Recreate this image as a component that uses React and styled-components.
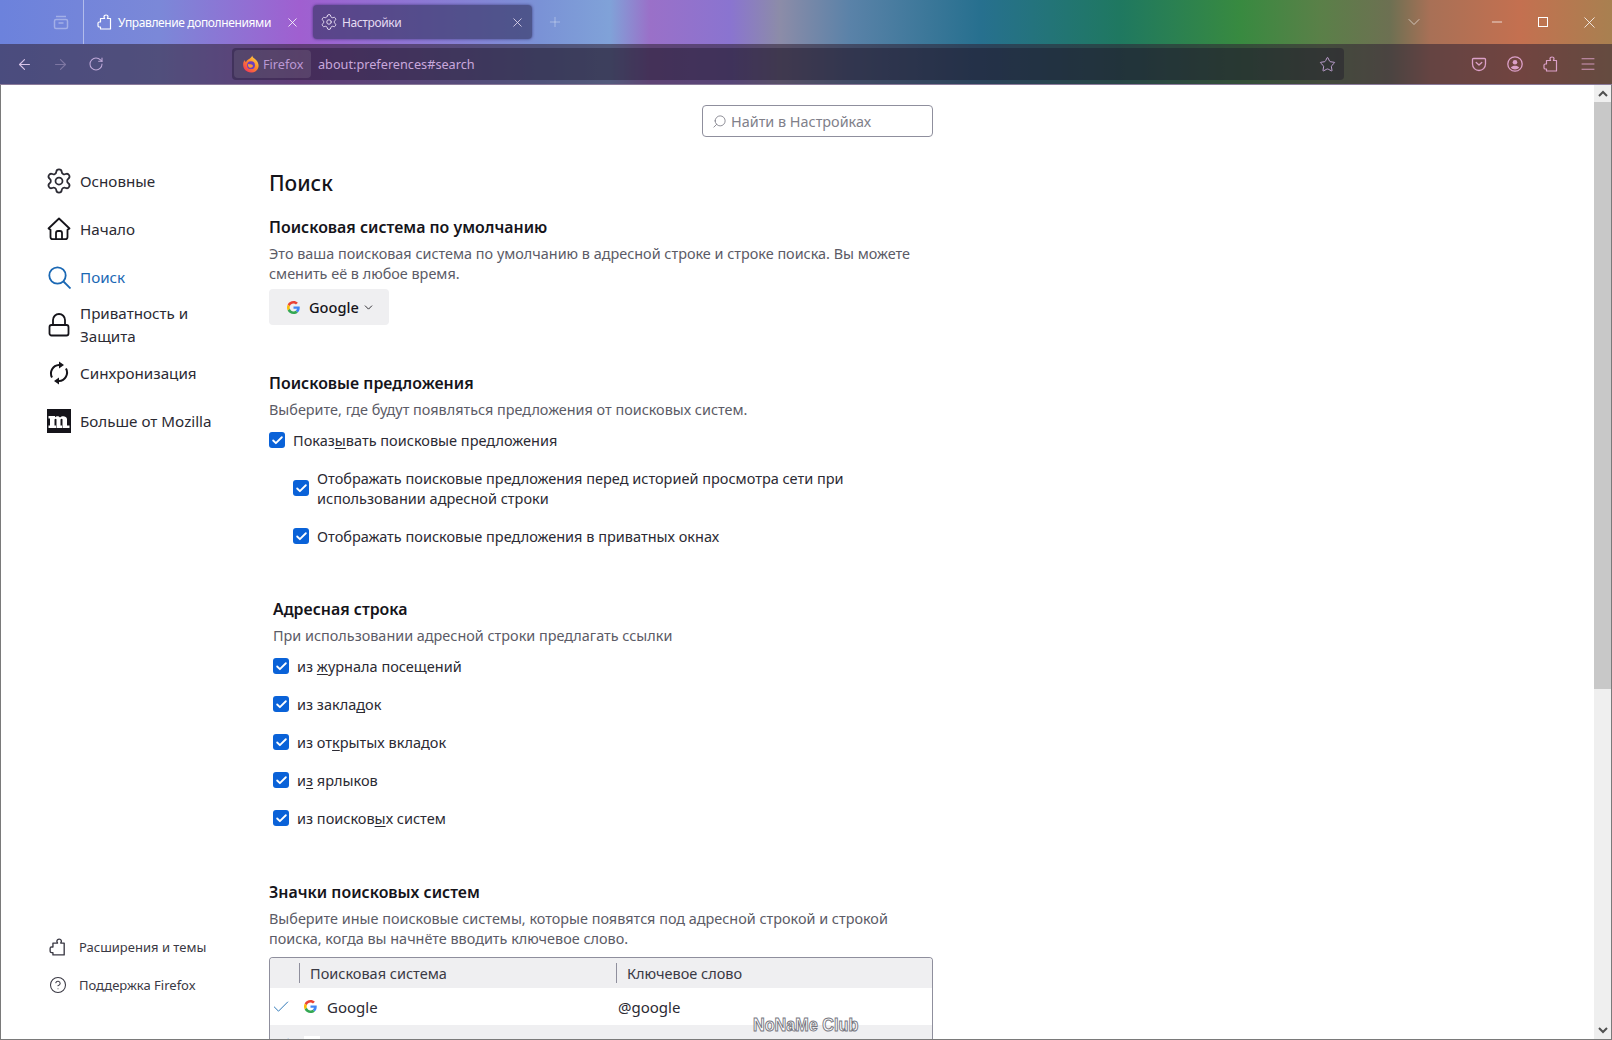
import React from 'react';
import styled, { createGlobalStyle } from 'styled-components';
import { ArrowLeft, ArrowRight, RotateCw, X, Plus, ChevronDown, Minus, Star, Menu, Settings, Search, CircleHelp, Check } from 'lucide-react';

const GlobalStyle = createGlobalStyle`
  html, body {
    margin: 0;
    padding: 0;
    height: 1040px;
    overflow: hidden;
    background: #fff;
    font-family: "Noto Sans", "Open Sans", sans-serif;
    color: #15141a;
  }
  * { box-sizing: border-box; }
`;

const Window = styled.div`
  width: 1612px;
  height: 1040px;
  display: flex;
  flex-direction: column;
  position: relative;
  overflow: hidden;
`;

const Chrome = styled.header`
  height: 85px;
  flex: none;
  display: flex;
  flex-direction: column;
  background: linear-gradient(90deg,
    #6c82dc 0, #7b88d8 160px, #a05fd0 300px, #8d78d4 420px, #7a92d6 540px, #80a2d8 610px,
    #9a70c8 650px, #8a74d0 730px, #8c8ca8 780px, #5a82a8 850px, #27708f 980px,
    #1f7860 1120px, #388a40 1240px, #5a8048 1320px, #6d7052 1390px, #a87056 1430px,
    #c47050 1520px, #a88050 1612px);
  border-bottom: 1px solid #8a7a9a;
`;

const TabStrip = styled.div`
  height: 44px;
  display: flex;
  align-items: center;
  color: #fff;
`;

const TabsButton = styled.div`
  width: 84px;
  height: 44px;
  padding-left: 53px;
  display: flex;
  align-items: center;
  border-right: 1px solid rgba(255, 255, 255, 0.45);
  color: rgba(255, 255, 255, 0.35);
`;

const Tab = styled.div`
  width: ${p => p.$width}px;
  height: 34px;
  margin-left: ${p => p.$gap || 0}px;
  padding: 0 ${p => p.$right}px 0 ${p => p.$left}px;
  display: flex;
  align-items: center;
  gap: 5px;
  font-size: 12px;
  letter-spacing: -0.38px;
  border-radius: 4px;
  color: ${p => (p.$active ? '#e6dcf2' : '#fff')};
  background: ${p => (p.$active ? 'rgba(50, 50, 95, 0.62)' : 'transparent')};
  box-shadow: ${p => (p.$active ? '0 0 3px rgba(40, 30, 90, 0.7)' : 'none')};

  span {
    flex: 1;
    white-space: nowrap;
  }
`;

const NewTab = styled.div`
  display: flex;
  margin-left: 15px;
  color: rgba(255, 255, 255, 0.35);
`;

const StripSpacer = styled.div`
  flex: 1;
`;

const AllTabs = styled.div`
  display: flex;
  margin-right: 50px;
  color: rgba(255, 255, 255, 0.6);
`;

const WindowButton = styled.div`
  width: 46px;
  height: 44px;
  display: flex;
  align-items: center;
  justify-content: center;
  color: #fff;
`;

const MaximizeGlyph = styled.span`
  width: 10px;
  height: 10px;
  border: 1px solid #fff;
`;

const Toolbar = styled.div`
  height: 40px;
  display: flex;
  align-items: center;
  background: rgba(48, 34, 52, 0.56);
  color: #d9b4dc;
`;

const NavButtons = styled.div`
  width: 232px;
  padding-left: 16px;
  display: flex;
  align-items: center;
  gap: 19px;
  flex: none;
`;

const NavIcon = styled.div`
  display: flex;
  color: ${p => p.$color || '#d8c4e8'};
  opacity: ${p => (p.$dim ? 0.35 : 1)};
`;

const UrlBar = styled.div`
  width: 1112px;
  height: 32px;
  padding: 0 8px 0 2px;
  display: flex;
  align-items: center;
  border-radius: 4px;
  background: rgba(22, 16, 38, 0.36);
  font-size: 12.7px;
  color: #c9a8dc;
`;

const Identity = styled.div`
  width: 77px;
  height: 28px;
  padding-left: 8px;
  display: flex;
  align-items: center;
  gap: 3px;
  border-radius: 4px;
  background: rgba(255, 255, 255, 0.1);
  color: #bb98d4;
`;

const UrlText = styled.span`
  flex: 1;
  margin-left: 7px;
`;

const ToolIcons = styled.div`
  flex: 1;
  display: flex;
  justify-content: flex-end;
  align-items: center;
  gap: 20px;
  padding-right: 15px;
  color: #dca0c8;
`;

const Body = styled.div`
  flex: 1;
  min-height: 0;
  display: flex;
  border-left: 1px solid #7a7a7a;
  border-right: 1px solid #7a7a7a;
  border-bottom: 1px solid #7a7a7a;
`;

const Content = styled.div`
  flex: 1;
  min-width: 0;
  display: grid;
  grid-template-columns: 268px 664px;
  overflow: hidden;
`;

const Sidebar = styled.nav`
  display: flex;
  flex-direction: column;
  padding: 72px 0 58px 46px;
`;

const NavItem = styled.div`
  height: 48px;
  display: flex;
  align-items: center;
  gap: 9px;
  font-size: 15.2px;
  line-height: 23px;
  color: ${p => (p.$selected ? '#1a68b4' : '#2b2a33')};

  svg {
    flex: none;
  }
`;

const SidebarFooter = styled.div`
  margin-top: auto;
  display: flex;
  flex-direction: column;
`;

const FooterItem = styled.div`
  height: 38px;
  padding-left: 2px;
  display: flex;
  align-items: center;
  gap: 12px;
  font-size: 13px;
  color: #3a3944;
`;

const Main = styled.main`
  padding-top: 20px;
  display: flex;
  flex-direction: column;
  align-items: flex-start;
`;

const SearchBox = styled.div`
  width: 231px;
  height: 32px;
  align-self: flex-end;
  padding: 0 8px 0 9px;
  display: flex;
  align-items: center;
  gap: 4px;
  border: 1px solid #8f8f9d;
  border-radius: 4px;
  font-size: 14.4px;
  color: #80808a;
  flex: none;

  svg {
    transform: scaleX(-1);
  }
`;

const PageTitle = styled.h1`
  margin: 30px 0 0;
  font-size: 21px;
  line-height: 32px;
  font-weight: 500;
`;

const SectionTitle = styled.h2`
  margin: ${p => p.$top}px 0 0 ${p => p.$indent || 0}px;
  font-size: 15.9px;
  line-height: 24px;
  font-weight: 600;
`;

const Description = styled.p`
  margin: 5px 0 0 ${p => p.$indent || 0}px;
  font-size: 14.42px;
  line-height: 20px;
  color: #5b5b66;
`;

const EngineButton = styled.div`
  width: 120px;
  height: 36px;
  margin-top: 5px;
  display: flex;
  align-items: center;
  padding-left: 18px;
  gap: 9px;
  border-radius: 4px;
  background: #efeff1;
  font-size: 14.6px;
  font-weight: 500;
`;

const CheckRow = styled.label`
  display: flex;
  align-items: center;
  gap: 8px;
  margin: ${p => p.$top}px 0 0 ${p => p.$indent || 0}px;
  font-size: 14.5px;
  line-height: 20px;
  color: #2b2a33;

  u {
    text-underline-offset: 2px;
  }
`;

const CheckBox = styled.span`
  width: 16px;
  height: 16px;
  flex: none;
  display: flex;
  align-items: center;
  justify-content: center;
  border-radius: 3px;
  background: #0a62d8;
  color: #fff;
`;

const EngineTable = styled.div`
  width: 664px;
  margin-top: 8px;
  border: 1px solid #8f8f9d;
  border-bottom: 0;
  border-radius: 4px 4px 0 0;
  flex: none;
  overflow: hidden;
`;

const TableRow = styled.div`
  display: grid;
  grid-template-columns: 29px 317px 1fr;
  align-items: center;
  height: ${p => p.$height}px;
  font-size: ${p => (p.$head ? 14.5 : 15)}px;
  color: ${p => (p.$head ? '#3a3944' : '#2b2a33')};
  background: ${p => (p.$shaded ? '#efeff1' : '#fff')};
`;

const HeadCell = styled.div`
  height: 20px;
  padding-left: 10px;
  display: flex;
  align-items: center;
  border-left: 1px solid #8f8f9d;
`;

const NameCell = styled.div`
  display: flex;
  align-items: center;
  gap: 10px;
  padding-left: 5px;
`;

const KeywordCell = styled.span`
  padding-left: 2px;
`;

const CheckMark = styled.div`
  display: flex;
  justify-content: flex-start;
  padding-left: 1px;
  color: #2f78b8;
`;

const WikiIcon = styled.span`
  width: 16px;
  height: 16px;
  font-family: "Liberation Serif", serif;
  font-size: 12px;
  text-align: center;
  line-height: 16px;
  background: #fff;
`;

const Scrollbar = styled.div`
  width: 17px;
  flex: none;
  display: flex;
  flex-direction: column;
  background: #efefef;
`;

const ScrollArrow = styled.div`
  height: 17px;
  flex: none;
  display: flex;
  align-items: center;
  justify-content: center;
  color: #505050;
`;

const ScrollThumb = styled.div`
  height: 587px;
  flex: none;
  background: #c8c8c8;
`;

const ScrollTrack = styled.div`
  flex: 1;
`;

const Watermark = styled.div`
  position: absolute;
  left: 753px;
  top: 1015px;
  font-family: "Liberation Sans", sans-serif;
  font-size: 18px;
  line-height: 20px;
  font-weight: 700;
  white-space: nowrap;
  color: #fff;
  -webkit-text-stroke: 1px #77777f;
  transform: scaleX(0.9);
  transform-origin: left center;
`;

const GoogleIcon = ({ size = 16 }) => (
  <svg width={size} height={size} viewBox="0 0 48 48">
    <path fill="#EA4335" d="M24 9.500c3.500 0 6.700 1.200 9.200 3.600l6.900-6.900C35.900 2.400 30.500 0 24 0 14.600 0 6.500 5.400 2.600 13.200l8 6.200C12.500 13.700 17.800 9.500 24 9.500z" />
    <path fill="#4285F4" d="M47 24.500c0-1.600-.1-3.100-.4-4.500H24v9h12.900c-.6 3-2.200 5.500-4.700 7.200l7.700 6C44.400 38 47 31.800 47 24.500z" />
    <path fill="#FBBC05" d="M10.600 28.600c-.5-1.400-.8-3-.8-4.600s.3-3.200.8-4.600l-8-6.200C.9 16.500 0 20.100 0 24s.9 7.500 2.600 10.800l8-6.200z" />
    <path fill="#34A853" d="M24 48c6.500 0 11.900-2.100 15.900-5.800l-7.700-6c-2.200 1.500-5 2.300-8.200 2.300-6.200 0-11.500-4.200-13.400-9.900l-8 6.200C6.500 42.600 14.600 48 24 48z" />
  </svg>
);

const FirefoxIcon = () => (
  <svg width="18" height="18" viewBox="0 0 32 32">
    <defs>
      <linearGradient id="foxFlame" x1="0.85" y1="0.05" x2="0.15" y2="0.95">
        <stop offset="0" stopColor="#ffd84a" />
        <stop offset="0.45" stopColor="#ff8a2a" />
        <stop offset="1" stopColor="#f0365a" />
      </linearGradient>
    </defs>
    <path fill="url(#foxFlame)" d="M18 1c1 4 4 5 7 8 5 5 6 12 2 17-3 4-7 5-11 5C8 31 2 25 2 17c0-3 1-6 3-8 0 2 1 3 2 4 1-4 4-5 7-7 2-1 4-3 4-5z" />
    <circle cx="16" cy="18" r="7" fill="#6a3fc0" />
    <path fill="#ff9a2e" d="M11 16c2 1 4 0 6 1 2 .5 3 2 2 4-1 1.500-4 2-6 1-2-1-3-4-2-6z" />
  </svg>
);

const TabsIcon = () => (
  <svg width="16" height="16" viewBox="0 0 16 16" fill="none" stroke="currentColor" strokeWidth="1.500">
    <rect x="1.500" y="5.500" width="13" height="9" rx="1.500" />
    <path d="M3 2.500h10M5.500 9h5" />
  </svg>
);

const PuzzleIcon = ({ size = 16 }) => (
  <svg width={size} height={size} viewBox="0 0 16 16" fill="none" stroke="currentColor" strokeWidth="1.200" strokeLinejoin="round">
    <path d="M9 1C7.900 1 7 1.800 7 2.800c0 .6.300 1.100.6 1.700H3.500V8H2.300C1.500 8 1 8.500 1 9.300v2.400c0 .8.500 1.300 1.300 1.300h1.200v2h10V4.500h-3.100c.3-.6.600-1.100.6-1.700C11 1.800 10.100 1 9 1z" />
  </svg>
);

const GearIcon = ({ size = 16 }) => (
  size > 20
    ? <Settings size={28} strokeWidth={1.500} style={{ margin: '0 -2px' }} />
    : <Settings size={size + 2} strokeWidth={1.300} style={{ margin: '0 -1px' }} />
);

const SearchGlyph = () => (
  <svg width="24" height="24" viewBox="0 0 24 24" fill="none" stroke="currentColor" strokeWidth="1.800">
    <circle cx="10.500" cy="10.500" r="8.200" />
    <path d="m16.500 16.500 7 7" />
  </svg>
);

const HomeIcon = () => (
  <svg width="24" height="24" viewBox="0 0 24 24" fill="none" stroke="#15141a" strokeWidth="1.800" strokeLinejoin="round">
    <path d="M12 1.500 1.500 11.500l2 1.300V20a2.200 2.200 0 0 0 2.200 2.200h12.600a2.200 2.200 0 0 0 2.200-2.200v-7.200l2-1.300z" />
    <path d="M9 22v-6a2 2 0 0 1 2-2h2a2 2 0 0 1 2 2v6" />
  </svg>
);

const LockIcon = () => (
  <svg width="24" height="24" viewBox="0 0 24 24" fill="none" stroke="#15141a" strokeWidth="1.800">
    <rect x="2.500" y="12" width="19" height="10.500" rx="2" />
    <path d="M6 12V7a6 6 0 0 1 12 0v5" />
  </svg>
);

const SyncIcon = () => (
  <svg width="24" height="24" viewBox="0 0 24 24" fill="none" stroke="#15141a" strokeWidth="2">
    <path d="M5 16.500A8.500 8.500 0 0 1 12 4h1" />
    <path d="M19 7.500A8.500 8.500 0 0 1 12 20h-1" />
    <path fill="#15141a" stroke="none" d="M12 .5 17 4l-5 3.500zM12 16.500 7 20l5 3.500z" />
  </svg>
);

const MozillaIcon = () => (
  <svg width="24" height="24" viewBox="0 0 24 24">
    <rect width="24" height="24" fill="#15141a" />
    <path fill="#fff" d="M1.500 7H8v1.300c1.200-1.300 3.600-1.800 5 .2 1.700-2 6.500-2 7 1.500v6.500h2.500V19h-7v-8.500c0-1-1.500-1-2 0v6H15V19H9.500v-8.500c0-1-1.500-1-2 0v6H9V19H1.500v-2.500H3v-7H1.500z" />
  </svg>
);

const PocketIcon = () => (
  <svg width="16" height="16" viewBox="0 0 16 16" fill="none" stroke="currentColor" strokeWidth="1.300" strokeLinecap="round" strokeLinejoin="round">
    <path d="M2.500 2.500h11a1 1 0 0 1 1 1V8a6.500 6.500 0 0 1-13 0V3.500a1 1 0 0 1 1-1z" />
    <path d="m5.200 6.500 2.800 2.600 2.800-2.600" />
  </svg>
);

const AccountIcon = () => (
  <svg width="16" height="16" viewBox="0 0 16 16" fill="currentColor">
    <circle cx="8" cy="8" r="7.200" fill="none" stroke="currentColor" strokeWidth="1.300" />
    <circle cx="8" cy="6.300" r="2.300" />
    <path d="M3.800 11.800c1-1.500 2.500-2 4.200-2s3.200.5 4.200 2A6 6 0 0 1 8 13.500a6 6 0 0 1-4.200-1.700z" />
  </svg>
);

const SmallCheck = () => <Check size={13} strokeWidth={3.400} />;

const Option = ({ top, indent, children }) => (
  <CheckRow $top={top} $indent={indent}>
    <CheckBox><SmallCheck /></CheckBox>
    <span>{children}</span>
  </CheckRow>
);

const App = () => {
  return (
    <Window>
      <GlobalStyle />
      <Chrome>
        <TabStrip>
          <TabsButton><TabsIcon /></TabsButton>
          <Tab $width={219} $left={13} $right={3}>
            <PuzzleIcon />
            <span>Управление дополнениями</span>
            <X size={15} strokeWidth={1.300} />
          </Tab>
          <Tab $width={219} $active $gap={10} $left={8} $right={7}>
            <GearIcon />
            <span>Настройки</span>
            <X size={15} strokeWidth={1.300} />
          </Tab>
          <NewTab><Plus size={16} strokeWidth={1.500} /></NewTab>
          <StripSpacer />
          <AllTabs><ChevronDown size={20} strokeWidth={1.200} /></AllTabs>
          <WindowButton><Minus size={16} strokeWidth={1.100} /></WindowButton>
          <WindowButton><MaximizeGlyph /></WindowButton>
          <WindowButton><X size={19} strokeWidth={1} /></WindowButton>
        </TabStrip>
        <Toolbar>
          <NavButtons>
            <NavIcon><ArrowLeft size={17} strokeWidth={1.600} /></NavIcon>
            <NavIcon $dim><ArrowRight size={17} strokeWidth={1.600} /></NavIcon>
            <NavIcon $color="#bfa8d8"><RotateCw size={16} strokeWidth={1.600} /></NavIcon>
          </NavButtons>
          <UrlBar>
            <Identity><FirefoxIcon />Firefox</Identity>
            <UrlText>about:preferences#search</UrlText>
            <Star size={17} strokeWidth={1.300} color="#c9a8dc" />
          </UrlBar>
          <ToolIcons>
            <PocketIcon />
            <AccountIcon />
            <PuzzleIcon />
            <Menu size={18} strokeWidth={1.200} />
          </ToolIcons>
        </Toolbar>
      </Chrome>
      <Body>
        <Content>
          <Sidebar>
            <NavItem><GearIcon size={24} />Основные</NavItem>
            <NavItem><HomeIcon />Начало</NavItem>
            <NavItem $selected><SearchGlyph />Поиск</NavItem>
            <NavItem><LockIcon /><span>Приватность и<br />Защита</span></NavItem>
            <NavItem><SyncIcon />Синхронизация</NavItem>
            <NavItem><MozillaIcon />Больше от Mozilla</NavItem>
            <SidebarFooter>
              <FooterItem><PuzzleIcon size={18} />Расширения и темы</FooterItem>
              <FooterItem><CircleHelp size={18} strokeWidth={1.400} />Поддержка Firefox</FooterItem>
            </SidebarFooter>
          </Sidebar>
          <Main>
            <SearchBox>
              <Search size={15} strokeWidth={1.400} />
              Найти в Настройках
            </SearchBox>
            <PageTitle>Поиск</PageTitle>
            <SectionTitle $top={16}>Поисковая система по умолчанию</SectionTitle>
            <Description>
              Это ваша поисковая система по умолчанию в адресной строке и строке поиска. Вы можете сменить её в любое время.
            </Description>
            <EngineButton>
              <GoogleIcon size={13} />
              <span>Google</span>
              <ChevronDown size={13} strokeWidth={1.600} style={{ marginLeft: -6 }} />
            </EngineButton>
            <SectionTitle $top={46}>Поисковые предложения</SectionTitle>
            <Description>Выберите, где будут появляться предложения от поисковых систем.</Description>
            <Option top={10}>Показ<u>ы</u>вать поисковые предложения</Option>
            <Option top={18} indent={24}>
              Отображать поисковые предложения перед историей просмотра сети при<br />использовании адресной строки
            </Option>
            <Option top={18} indent={24}>Отображать поисковые предложения в приватных окнах</Option>
            <SectionTitle $top={51} $indent={4}>Адресная строка</SectionTitle>
            <Description $indent={4}>При использовании адресной строки предлагать ссылки</Description>
            <Option top={10} indent={4}>из <u>ж</u>урнала посещений</Option>
            <Option top={18} indent={4}>из закла<u>д</u>ок</Option>
            <Option top={18} indent={4}>из от<u>к</u>рытых вкладок</Option>
            <Option top={18} indent={4}>и<u>з</u> ярлыков</Option>
            <Option top={18} indent={4}>из поисков<u>ы</u>х систем</Option>
            <SectionTitle $top={52}>Значки поисковых систем</SectionTitle>
            <Description>
              Выберите иные поисковые системы, которые появятся под адресной строкой и строкой поиска, когда вы начнёте вводить ключевое слово.
            </Description>
            <EngineTable>
              <TableRow $height={30} $head $shaded>
                <span />
                <HeadCell>Поисковая система</HeadCell>
                <HeadCell>Ключевое слово</HeadCell>
              </TableRow>
              <TableRow $height={37}>
                <CheckMark><Check size={20} strokeWidth={1.200} /></CheckMark>
                <NameCell><GoogleIcon size={13} />Google</NameCell>
                <KeywordCell>@google</KeywordCell>
              </TableRow>
              <TableRow $height={37} $shaded>
                <CheckMark><Check size={20} strokeWidth={1.200} /></CheckMark>
                <NameCell><WikiIcon>W</WikiIcon>Википедия (ru)</NameCell>
                <KeywordCell>@wikipedia</KeywordCell>
              </TableRow>
            </EngineTable>
          </Main>
        </Content>
        <Scrollbar>
          <ScrollArrow>
            <svg width="10" height="7" viewBox="0 0 10 7" fill="none" stroke="currentColor" strokeWidth="2"><path d="m1 6 4-4 4 4" /></svg>
          </ScrollArrow>
          <ScrollThumb />
          <ScrollTrack />
          <ScrollArrow>
            <svg width="10" height="7" viewBox="0 0 10 7" fill="none" stroke="currentColor" strokeWidth="2"><path d="m1 1 4 4 4-4" /></svg>
          </ScrollArrow>
        </Scrollbar>
      </Body>
      <Watermark>NoNaMe Club</Watermark>
    </Window>
  );
};

export default App;
